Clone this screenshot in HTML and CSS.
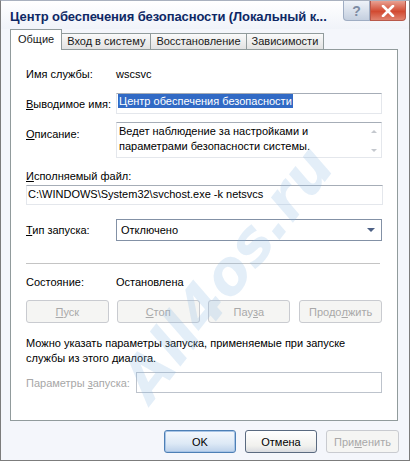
FILE: index.html
```html
<!DOCTYPE html>
<html lang="ru">
<head>
    <meta charset="UTF-8">
    <title>Свойства службы</title>
    <link rel="stylesheet" href="styles.css">
</head>
<body>
    <div class="window">
        <div class="titlebar">
            <span class="title">Центр обеспечения безопасности (Локальный к...</span>
            <div class="caption-buttons">
                <div class="cap-btn help">?</div>
                <div class="cap-btn close">
                    <svg width="14" height="12" viewBox="0 0 14 12">
                        <path d="M2 1 L12 11 M12 1 L2 11" stroke="#fff" stroke-width="2.6" stroke-linecap="round"/>
                    </svg>
                </div>
            </div>
        </div>

        <div class="tabs">
            <div class="tab active">Общие</div>
            <div class="tab">Вход в систему</div>
            <div class="tab">Восстановление</div>
            <div class="tab">Зависимости</div>
        </div>

        <div class="panel">
            <div class="row r-name">
                <span class="label">Имя службы:</span>
                <span class="value">wscsvc</span>
            </div>

            <div class="row r-display">
                <span class="label"><u>В</u>ыводимое имя:</span>
                <div class="field"><span class="selected">Центр обеспечения безопасности</span></div>
            </div>

            <div class="row r-desc">
                <span class="label"><u>О</u>писание:</span>
                <div class="field memo">
                    <span class="memo-text">Ведет наблюдение за настройками и<br>параметрами безопасности системы.</span>
                    <div class="memo-arrows">
                        <span class="arr up"></span>
                        <span class="arr down"></span>
                    </div>
                </div>
            </div>

            <div class="caption-line"><u>И</u>сполняемый файл:</div>
            <div class="field path">C:\WINDOWS\System32\svchost.exe -k netsvcs</div>

            <div class="row r-start">
                <span class="label"><u>Т</u>ип запуска:</span>
                <div class="field combo">
                    <span>Отключено</span>
                    <span class="combo-arrow"></span>
                </div>
            </div>

            <div class="separator"></div>

            <div class="row r-status">
                <span class="label">Состояние:</span>
                <span class="value">Остановлена</span>
            </div>

            <div class="svc-buttons">
                <div class="btn disabled"><u>П</u>уск</div>
                <div class="btn disabled"><u>С</u>топ</div>
                <div class="btn disabled">Пау<u>з</u>а</div>
                <div class="btn disabled">Продо<u>л</u>жить</div>
            </div>

            <p class="hint">Можно указать параметры запуска, применяемые при запуске<br>службы из этого диалога.</p>

            <div class="row r-params">
                <span class="label dim">Параметры <u>з</u>апуска:</span>
                <div class="field params"></div>
            </div>
        </div>

        <div class="footer">
            <div class="btn default">OK</div>
            <div class="btn">Отмена</div>
            <div class="btn disabled">При<u>м</u>енить</div>
        </div>

        <span class="watermark">All4os.ru</span>
    </div>
</body>
</html>
```

FILE: styles.css
```css
body {
    margin: 0;
    font-family: 'Liberation Sans', Arial, sans-serif;
    font-size: 11px;
    color: #000;
    background: #fff;
}

.window {
    position: relative;
    width: 410px;
    height: 461px;
    box-sizing: border-box;
    border: 1px solid #7c7c7c;
    border-top-color: #a9b1bf;
    background: #f4f6fb;
    display: flex;
    flex-direction: column;
    overflow: hidden;
}

.titlebar {
    height: 28px;
    display: flex;
    align-items: center;
    justify-content: space-between;
    padding-left: 9px;
    background: linear-gradient(#ffffff, #f0f3f9);
}

.title {
    font-weight: bold;
    font-size: 13px;
    color: #0e2865;
    letter-spacing: -0.1px;
    margin-top: 2px;
}

.caption-buttons {
    display: flex;
    align-self: flex-start;
    margin-right: 3px;
}

.cap-btn {
    height: 20px;
    display: flex;
    align-items: center;
    justify-content: center;
    border: 1px solid #9fadc3;
    border-top: none;
    box-sizing: border-box;
}

.help {
    width: 27px;
    border-radius: 0 0 0 4px;
    background: linear-gradient(#eef2f8, #c4cfdf);
    color: #7d8ca3;
    font-size: 14px;
    font-weight: bold;
}

.close {
    width: 36px;
    border-color: #b8584a;
    border-radius: 0 0 4px 0;
    background: linear-gradient(#e8a192, #d24a31 55%, #e0836f);
}

/* tabs */
.tabs {
    display: flex;
    align-items: flex-end;
    height: 20px;
    padding-left: 9px;
}

.tab {
    height: 16px;
    line-height: 15px;
    padding: 0 5px;
    border: 1px solid #919b9c;
    border-bottom: none;
    background: linear-gradient(#fafafa, #e2e2e2);
    color: #1a1a1a;
    margin-right: -1px;
    box-sizing: border-box;
}

.tab.active {
    height: 21px;
    line-height: 19px;
    padding: 0 7px;
    background: #fff;
    position: relative;
    z-index: 1;
    margin-bottom: -1px;
}

.panel {
    height: 372px;
    box-sizing: border-box;
    margin: 0 11px 0 9px;
    border: 1px solid #919b9c;
    background: #fff;
    padding: 17px 15px 0 15px;
}

.row {
    display: flex;
    align-items: center;
}

.label {
    width: 90px;
    flex: none;
    line-height: 14px;
}

.label.dim {
    width: 110px;
    color: #a7a7a7;
}

.value {
    line-height: 14px;
}

.field {
    box-sizing: border-box;
    width: 266px;
    border: 1px solid #e4e7ec;
    border-top-color: #a6adb7;
    background: #fff;
    line-height: 14px;
    padding: 2px 2px;
}

.r-display {
    margin-top: 12px;
}

.r-display .field {
    height: 21px;
    padding: 0 1px;
}

.selected {
    display: inline-block;
    background: #316ac5;
    color: #fff;
    line-height: 14px;
    padding: 0 1px;
}

.r-desc {
    margin-top: 8px;
    align-items: flex-start;
}

.r-desc .label {
    margin-top: 5px;
}

.memo {
    height: 36px;
    display: flex;
    justify-content: space-between;
    padding: 1px 3px 1px 2px;
}

.memo-text {
    line-height: 15px;
}

.memo-arrows {
    display: flex;
    flex-direction: column;
    justify-content: space-between;
    padding: 6px 1px 4px 0;
}

.arr {
    width: 0;
    height: 0;
    border-left: 3px solid transparent;
    border-right: 3px solid transparent;
}

.arr.up {
    border-bottom: 3px solid #c4c8ce;
}

.arr.down {
    border-top: 3px solid #c4c8ce;
}

.caption-line {
    margin-top: 11px;
    line-height: 14px;
}

.field.path {
    margin-top: 2px;
    width: 357px;
    height: 20px;
    padding: 1px 1px;
}

.r-start {
    margin-top: 14px;
}

.combo {
    height: 22px;
    border: 1px solid #8391a6;
    display: flex;
    align-items: center;
    justify-content: space-between;
    padding: 0 6px 0 4px;
}

.combo-arrow {
    width: 0;
    height: 0;
    border-left: 4px solid transparent;
    border-right: 4px solid transparent;
    border-top: 4px solid #4d6185;
}

.separator {
    margin-top: 22px;
    width: 354px;
    border-top: 1px solid #c4c4c4;
}

.r-status {
    margin-top: 11px;
}

.svc-buttons {
    margin-top: 11px;
    display: flex;
    gap: 8px;
}

.svc-buttons .btn {
    width: 83px;
}

.svc-buttons .btn:nth-child(4) {
    margin-left: 1px;
}

.btn {
    width: 73px;
    height: 23px;
    box-sizing: border-box;
    border: 1px solid #5a6a80;
    border-radius: 3px;
    background: linear-gradient(#ffffff, #f1f1ee 70%, #d9dbe0);
    display: flex;
    align-items: center;
    justify-content: center;
}

.btn.disabled {
    border-color: #c9cbd0;
    background: #f5f5f3;
    color: #a9a9a9;
}

.btn.default {
    border-color: #4d7fb5;
    background: linear-gradient(#f4f8fd, #dde9f6 60%, #bcd1ea);
    box-shadow: inset 0 0 0 1px #a7c4e6;
}

.hint {
    margin: 13px 0 0;
    line-height: 15px;
}

.r-params {
    margin-top: 6px;
}

.field.params {
    height: 21px;
    width: 246px;
    border-color: #bdc3cc;
}

.footer {
    display: flex;
    justify-content: flex-end;
    gap: 9px;
    padding: 9px 10px 0 0;
}

.footer .btn:nth-child(1),
.footer .btn:nth-child(2) {
    width: 72px;
}

.watermark {
    position: absolute;
    left: 226px;
    top: 272px;
    font-family: 'DejaVu Sans', sans-serif;
    font-size: 60px;
    font-weight: bold;
    font-style: italic;
    color: rgba(140, 182, 226, 0.24);
    transform: translate(-50%, -50%) rotate(-52deg);
    pointer-events: none;
    white-space: nowrap;
}
```
